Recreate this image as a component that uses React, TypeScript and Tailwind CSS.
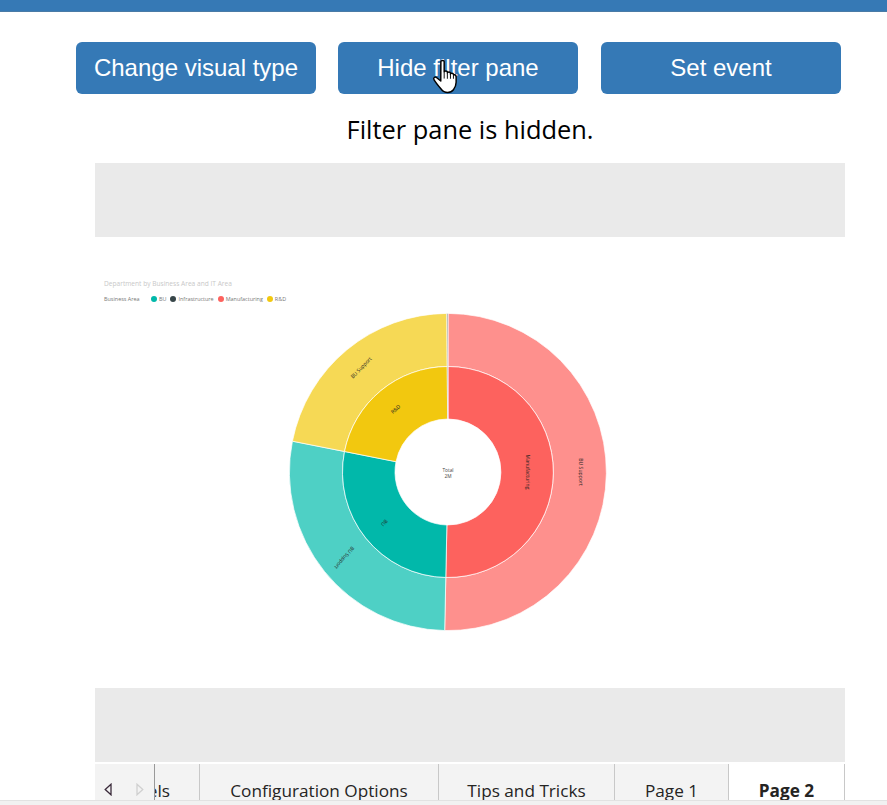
const legend = [
  { label: 'BU', color: 'bg-[#01b8aa]' },
  { label: 'Infrastructure', color: 'bg-[#374649]' },
  { label: 'Manufacturing', color: 'bg-[#fd625e]' },
  { label: 'R&D', color: 'bg-[#f2c80f]' },
];

const tabs = [
  { label: 'Configuration Options', width: 'w-[239px]' },
  { label: 'Tips and Tricks', width: 'w-[176px]' },
  { label: 'Page 1', width: 'w-[114px]' },
];

const CX = 159;
const CY = 159;

// angle in degrees, clockwise from the top
function point(r: number, deg: number) {
  const rad = (deg * Math.PI) / 180;
  return `${(CX + r * Math.sin(rad)).toFixed(2)} ${(CY - r * Math.cos(rad)).toFixed(2)}`;
}

function arc(r0: number, r1: number, a0: number, a1: number) {
  const large = a1 - a0 > 180 ? 1 : 0;
  return `M${point(r1, a0)} A${r1} ${r1} 0 ${large} 1 ${point(r1, a1)} L${point(r0, a1)} A${r0} ${r0} 0 ${large} 0 ${point(r0, a0)} Z`;
}

const slices = [
  { a0: 0, a1: 181.2, inner: '#fd625e', outer: '#fe908d' },
  { a0: 181.2, a1: 281.2, inner: '#01b8aa', outer: '#4ed0c5' },
  { a0: 281.2, a1: 359.6, inner: '#f2c80f', outer: '#f6d955' },
  { a0: 359.6, a1: 360, inner: '#374649', outer: '#6f7b7d' },
];

const labels = [
  { text: 'BU Support', x: 291.5, y: 159, rotate: 90 },
  { text: 'Manufacturing', x: 238.5, y: 159, rotate: 90 },
  { text: 'BU Support', x: 72.5, y: 55, rotate: -46 },
  { text: 'R&D', x: 107, y: 96.5, rotate: -42 },
  { text: 'BU', x: 95, y: 209.5, rotate: 130 },
  { text: 'BU Support', x: 55, y: 244.5, rotate: 130 },
];

function Sunburst() {
  return (
    <svg width="318" height="318" viewBox="0 0 318 318" className="block">
      {slices.map((s) => (
        <g key={s.a0} stroke="#ffffff" strokeWidth="0.7">
          <path d={arc(105.5, 158.6, s.a0, s.a1)} fill={s.outer} />
          <path d={arc(53, 105.5, s.a0, s.a1)} fill={s.inner} />
        </g>
      ))}
      {labels.map((l) => (
        <text
          key={l.text + l.x}
          x={l.x}
          y={l.y}
          fontSize="5.1"
          fill="#252423"
          textAnchor="middle"
          dominantBaseline="middle"
          transform={`rotate(${l.rotate} ${l.x} ${l.y})`}
        >
          {l.text}
        </text>
      ))}
      <text x={CX} y={157.5} fontSize="4.8" fill="#444444" textAnchor="middle" dominantBaseline="middle">Total</text>
      <text x={CX} y={163.5} fontSize="4.8" fill="#444444" textAnchor="middle" dominantBaseline="middle">2M</text>
    </svg>
  );
}

function HandCursor() {
  return (
    <svg width="28" height="35" viewBox="0 0 26 34" className="absolute left-[431px] top-[59px]">
      <path
        d="M9 2.5c0-1.3 3.2-1.3 3.2 0v10.2c0-1.4 3.1-1.4 3.1 0v1c0-1.4 3-1.4 3 0v1.1c0-1.3 2.9-1.3 2.9 0.2 0.6 0 2.6 0.2 2.6 2.2v5.5c0 3-0.9 5-2.6 7.2-1.5 2-3.4 2.6-5.6 2.6-3 0-4.8-1.2-6.4-3.4-2.3-2.6-5.4-6.4-6.8-8.8-1.2-1.9 0.8-3.6 2.6-2.1l3.9 3.2z"
        fill="#ffffff"
        stroke="#000000"
        strokeWidth="1.4"
        strokeLinejoin="round"
      />
      <path d="M12.2 13v6M15.3 13.8v5.4M18.3 15v4.2M21.2 15.5v3.7" stroke="#000000" strokeWidth="0.9" fill="none" />
    </svg>
  );
}

export default function App() {
  return (
    <div className="relative h-[805px] w-[887px] overflow-hidden bg-white font-['Liberation_Sans',sans-serif]">
      <div className="h-3 border-b border-[#4a7ba6] bg-[#3679b5]" />

      <div className="mt-[30px] flex gap-[22px] pl-[76px]">
        <button className="h-[52px] w-[240px] rounded-md bg-[#3579b6] text-2xl text-white">Change visual type</button>
        <button className="h-[52px] w-[240px] rounded-md bg-[#3579b6] text-2xl text-white">Hide filter pane</button>
        <button className="ml-px h-[52px] w-[240px] rounded-md bg-[#3579b6] text-2xl text-white">Set event</button>
      </div>
      <HandCursor />

      <div className="ml-[95px] w-[750px]">
        <p className="mt-[17px] h-[52px] text-center font-['Open_Sans',sans-serif] text-[25.4px] leading-[36px] text-black">
          Filter pane is hidden.
        </p>
        <div className="h-[74px] bg-[#eaeaea]" />

        <div className="h-[451px] pl-[9px] pt-[42px] font-['Open_Sans',sans-serif]">
          <p className="text-[6.6px] leading-[9px] text-[#c8c8c8]">Department by Business Area and IT Area</p>
          <div className="mt-[7px] flex h-[9px] items-center text-[5.45px] text-[#777777]">
            <span className="mr-[9px] w-[38px] whitespace-nowrap">Business Area</span>
            {legend.map((item) => (
              <span key={item.label} className="mr-[4px] flex items-center gap-[2px] whitespace-nowrap">
                <span className={`h-[6px] w-[6px] rounded-full ${item.color}`} />
                {item.label}
              </span>
            ))}
          </div>
          <div className="ml-[184.5px] mt-[8.5px]">
            <Sunburst />
          </div>
        </div>

        <div className="h-[74px] bg-[#eaeaea]" />

        <div className="mt-[2px] flex h-[36px] items-stretch overflow-hidden bg-[#f3f3f3] font-['Open_Sans',sans-serif] text-[17.2px] leading-[53px] text-[#252423]">
          <div className="flex w-[60px] shrink-0 items-end gap-[24px] border-r border-[#999999] pb-[4px] pl-[9px]">
            <svg width="8" height="13" viewBox="0 0 8 13">
              <path d="M7 1.2 1.2 6.5 7 11.8z" fill="none" stroke="#3a2a3a" strokeWidth="1.3" />
            </svg>
            <svg width="8" height="13" viewBox="0 0 8 13">
              <path d="M1 1.2 6.8 6.5 1 11.8z" fill="none" stroke="#d0d0d0" strokeWidth="1.3" />
            </svg>
          </div>
          <div className="flex w-[45px] shrink-0 justify-end overflow-hidden border-r border-[#c8c8c8] pr-[29px]">
            <span className="whitespace-nowrap">Models</span>
          </div>
          {tabs.map((tab) => (
            <div key={tab.label} className={`${tab.width} shrink-0 whitespace-nowrap border-r border-[#c8c8c8] text-center`}>
              {tab.label}
            </div>
          ))}
          <div className="w-[116px] shrink-0 whitespace-nowrap border-r border-[#c8c8c8] bg-white text-center font-bold">
            Page 2
          </div>
        </div>
      </div>

      <div className="absolute bottom-0 left-0 h-[5px] w-full border-t border-[#e2e2e2] bg-[#f1f1f1]" />
    </div>
  );
}
